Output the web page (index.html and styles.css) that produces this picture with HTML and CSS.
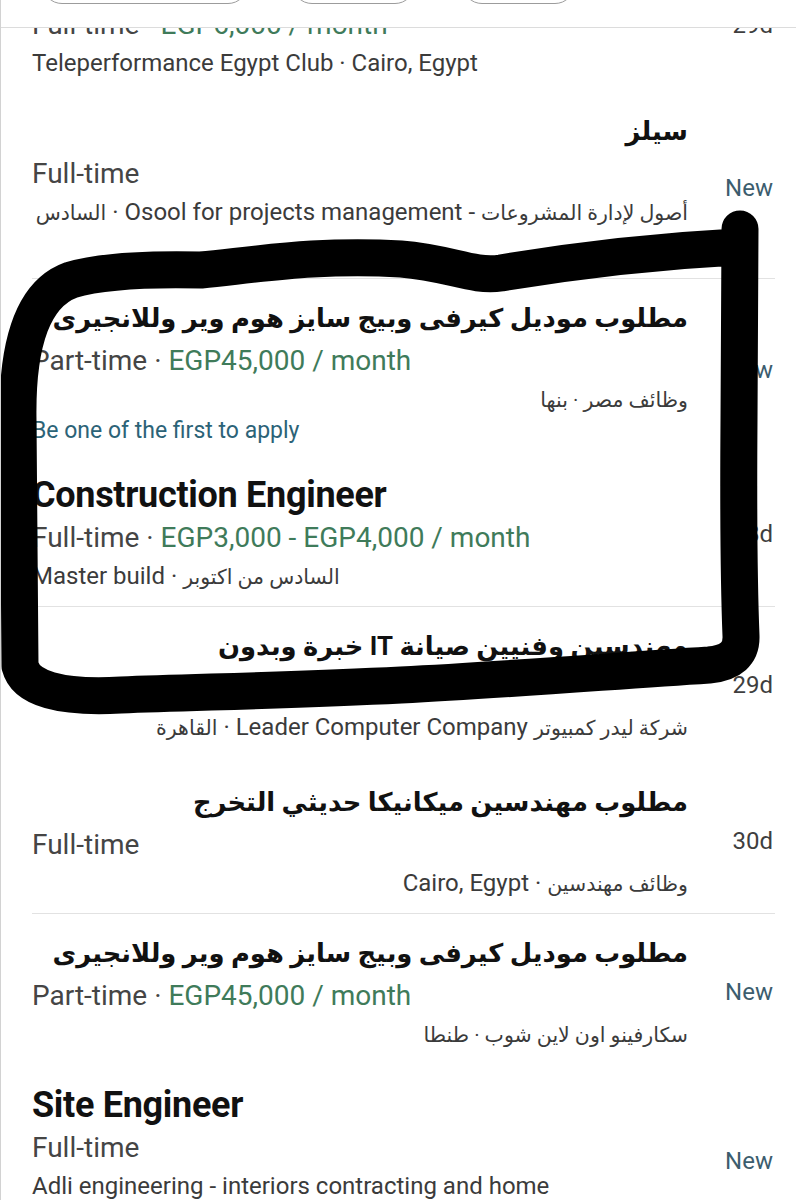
FILE: index.html
```html
<!DOCTYPE html>
<html lang="en">
<head>
<meta charset="utf-8">
<title>Jobs</title>
<link rel="stylesheet" href="styles.css">
</head>
<body>
<div class="screen">
  <header class="filters">
    <span class="pill pill-wide"></span>
    <span class="pill pill-mid"></span>
    <span class="pill pill-small"></span>
  </header>

  <ul class="jobs">
    <li class="job first">
      <div class="info">
        <h3 class="title" dir="auto">Customer Service Representative</h3>
        <p class="terms">Full-time · <span class="pay">EGP6,000 / month</span></p>
        <p class="company" dir="auto">Teleperformance Egypt Club · Cairo, Egypt</p>
      </div>
      <span class="age age-first">29d</span>
    </li>

    <li class="job sep">
      <div class="info roomy">
        <h3 class="title" dir="auto" lang="ar">سيلز</h3>
        <p class="terms">Full-time</p>
        <p class="company" dir="auto"><span lang="ar">أصول لإدارة المشروعات</span> - Osool for projects management · <span lang="ar">السادس</span></p>
      </div>
      <span class="age new">New</span>
    </li>

    <li class="job">
      <div class="info">
        <h3 class="title" dir="auto" lang="ar">مطلوب موديل كيرفى وبيج سايز هوم وير وللانجيرى</h3>
        <p class="terms">Part-time · <span class="pay">EGP45,000 / month</span></p>
        <p class="company" dir="auto"><span lang="ar">وظائف مصر · بنها</span></p>
        <p class="apply">Be one of the first to apply</p>
      </div>
      <span class="age new">New</span>
    </li>

    <li class="job sep">
      <div class="info">
        <h3 class="title" dir="auto">Construction Engineer</h3>
        <p class="terms">Full-time · <span class="pay">EGP3,000 - EGP4,000 / month</span></p>
        <p class="company" dir="auto">Master build · <span lang="ar">السادس من اكتوبر</span></p>
      </div>
      <span class="age">28d</span>
    </li>

    <li class="job spaced">
      <div class="info">
        <h3 class="title" dir="auto" lang="ar">مهندسين وفنيين صيانة IT خبرة وبدون</h3>
        <p class="terms">Full-time · <span class="pay">EGP6,000 / month</span></p>
        <p class="company" dir="auto"><span lang="ar">شركة ليدر كمبيوتر</span> Leader Computer Company · <span lang="ar">القاهرة</span></p>
      </div>
      <span class="age">29d</span>
    </li>

    <li class="job sep">
      <div class="info">
        <h3 class="title" dir="auto" lang="ar">مطلوب مهندسين ميكانيكا حديثي التخرج</h3>
        <p class="terms">Full-time</p>
        <p class="company" dir="auto"><span lang="ar">وظائف مهندسين</span> · Cairo, Egypt</p>
      </div>
      <span class="age">30d</span>
    </li>

    <li class="job">
      <div class="info">
        <h3 class="title" dir="auto" lang="ar">مطلوب موديل كيرفى وبيج سايز هوم وير وللانجيرى</h3>
        <p class="terms">Part-time · <span class="pay">EGP45,000 / month</span></p>
        <p class="company" dir="auto"><span lang="ar">سكارفينو اون لاين شوب · طنطا</span></p>
      </div>
      <span class="age new">New</span>
    </li>

    <li class="job">
      <div class="info">
        <h3 class="title" dir="auto">Site Engineer</h3>
        <p class="terms">Full-time</p>
        <p class="company" dir="auto">Adli engineering - interiors contracting and home<br>furnishing · Cairo, Egypt</p>
      </div>
      <span class="age new">New</span>
    </li>
  </ul>

  <svg class="marker" viewBox="0 0 796 1200" aria-hidden="true">
    <path d="M739 229 L738 420 Q737 560 740 636 Q741 662 708 665 C600 672 500 680 400 685 C300 690 200 692 120 695 Q28 700 19 666 L17 420 Q15 300 70 280 Q110 268 200 270 C260 264 320 254 400 259 C450 263 470 277 500 273 C560 263 640 252 735 247"/>
  </svg>
</div>
</body>
</html>
```

FILE: styles.css
```css
* {
  box-sizing: border-box;
}

html,
body {
  margin: 0;
  background: #ffffff;
}

body {
  font-family: Roboto, "DejaVu Sans", sans-serif;
  color: #444444;
}

.screen {
  position: relative;
  width: 796px;
  height: 1200px;
  overflow: hidden;
  border-left: 1px solid #d2d2d2;
  background: #ffffff;
}

/* sticky filter bar, scrolled so only the pill bottoms show */
.filters {
  position: absolute;
  top: 0;
  left: 0;
  right: 0;
  z-index: 2;
  height: 28px;
  padding: 0 0 23px 41px;
  display: flex;
  align-items: flex-end;
  gap: 44px;
  background: #ffffff;
  border-bottom: 1px solid #dcdcdc;
}

.pill {
  flex: none;
  height: 40px;
  border: 1.5px solid #9c9c9c;
  border-radius: 20px;
}

.pill-wide {
  width: 206px;
}

.pill-mid {
  width: 123px;
}

.pill-small {
  width: 113px;
  margin-left: 3px;
}

/* job list (scrolled) */
.jobs {
  list-style: none;
  margin: -59px 0 0;
  padding: 0;
}

.job {
  display: grid;
  grid-template-columns: 656px 1fr;
  align-items: center;
  margin: 0 21px 0 31px;
  padding: 17px 2px 13px 0;
}

.job.first {
  padding: 19px 2px 11px 0;
}

.job.sep {
  border-bottom: 1px solid #e2e2e2;
  padding-bottom: 11px;
}

.job.spaced {
  padding-bottom: 17px;
}

.info {
  min-width: 0;
}

.info.roomy {
  padding-bottom: 36px;
}

.title {
  margin: 0;
  font-size: 36px;
  line-height: 44px;
  font-weight: 700;
  color: #111111;
  white-space: nowrap;
  letter-spacing: -0.3px;
}

.title:lang(ar) {
  font-size: 25.8px;
  letter-spacing: 0;
}

.terms {
  margin: 0;
  font-size: 28px;
  line-height: 42px;
  color: #454545;
}

.pay {
  color: #3f7b5a;
}

.company {
  margin: 0;
  font-size: 24px;
  line-height: 35px;
  color: #3b3b3b;
}

.company span:lang(ar) {
  font-size: 20.5px;
}

.apply {
  margin: 0;
  font-size: 23px;
  line-height: 25px;
  color: #2c6377;
}

.age {
  justify-self: end;
  font-size: 24px;
  line-height: 32px;
  color: #3e3e3e;
}

.age.new {
  color: #3c5d6e;
}

.age-first {
  padding-top: 8px;
}

/* hand-drawn marker loop on top of the screenshot */
.marker {
  position: absolute;
  top: 0;
  left: 0;
  width: 796px;
  height: 1200px;
  z-index: 3;
  pointer-events: none;
}

.marker path {
  fill: none;
  stroke: #000000;
  stroke-width: 37;
  stroke-linecap: round;
  stroke-linejoin: round;
}
```
